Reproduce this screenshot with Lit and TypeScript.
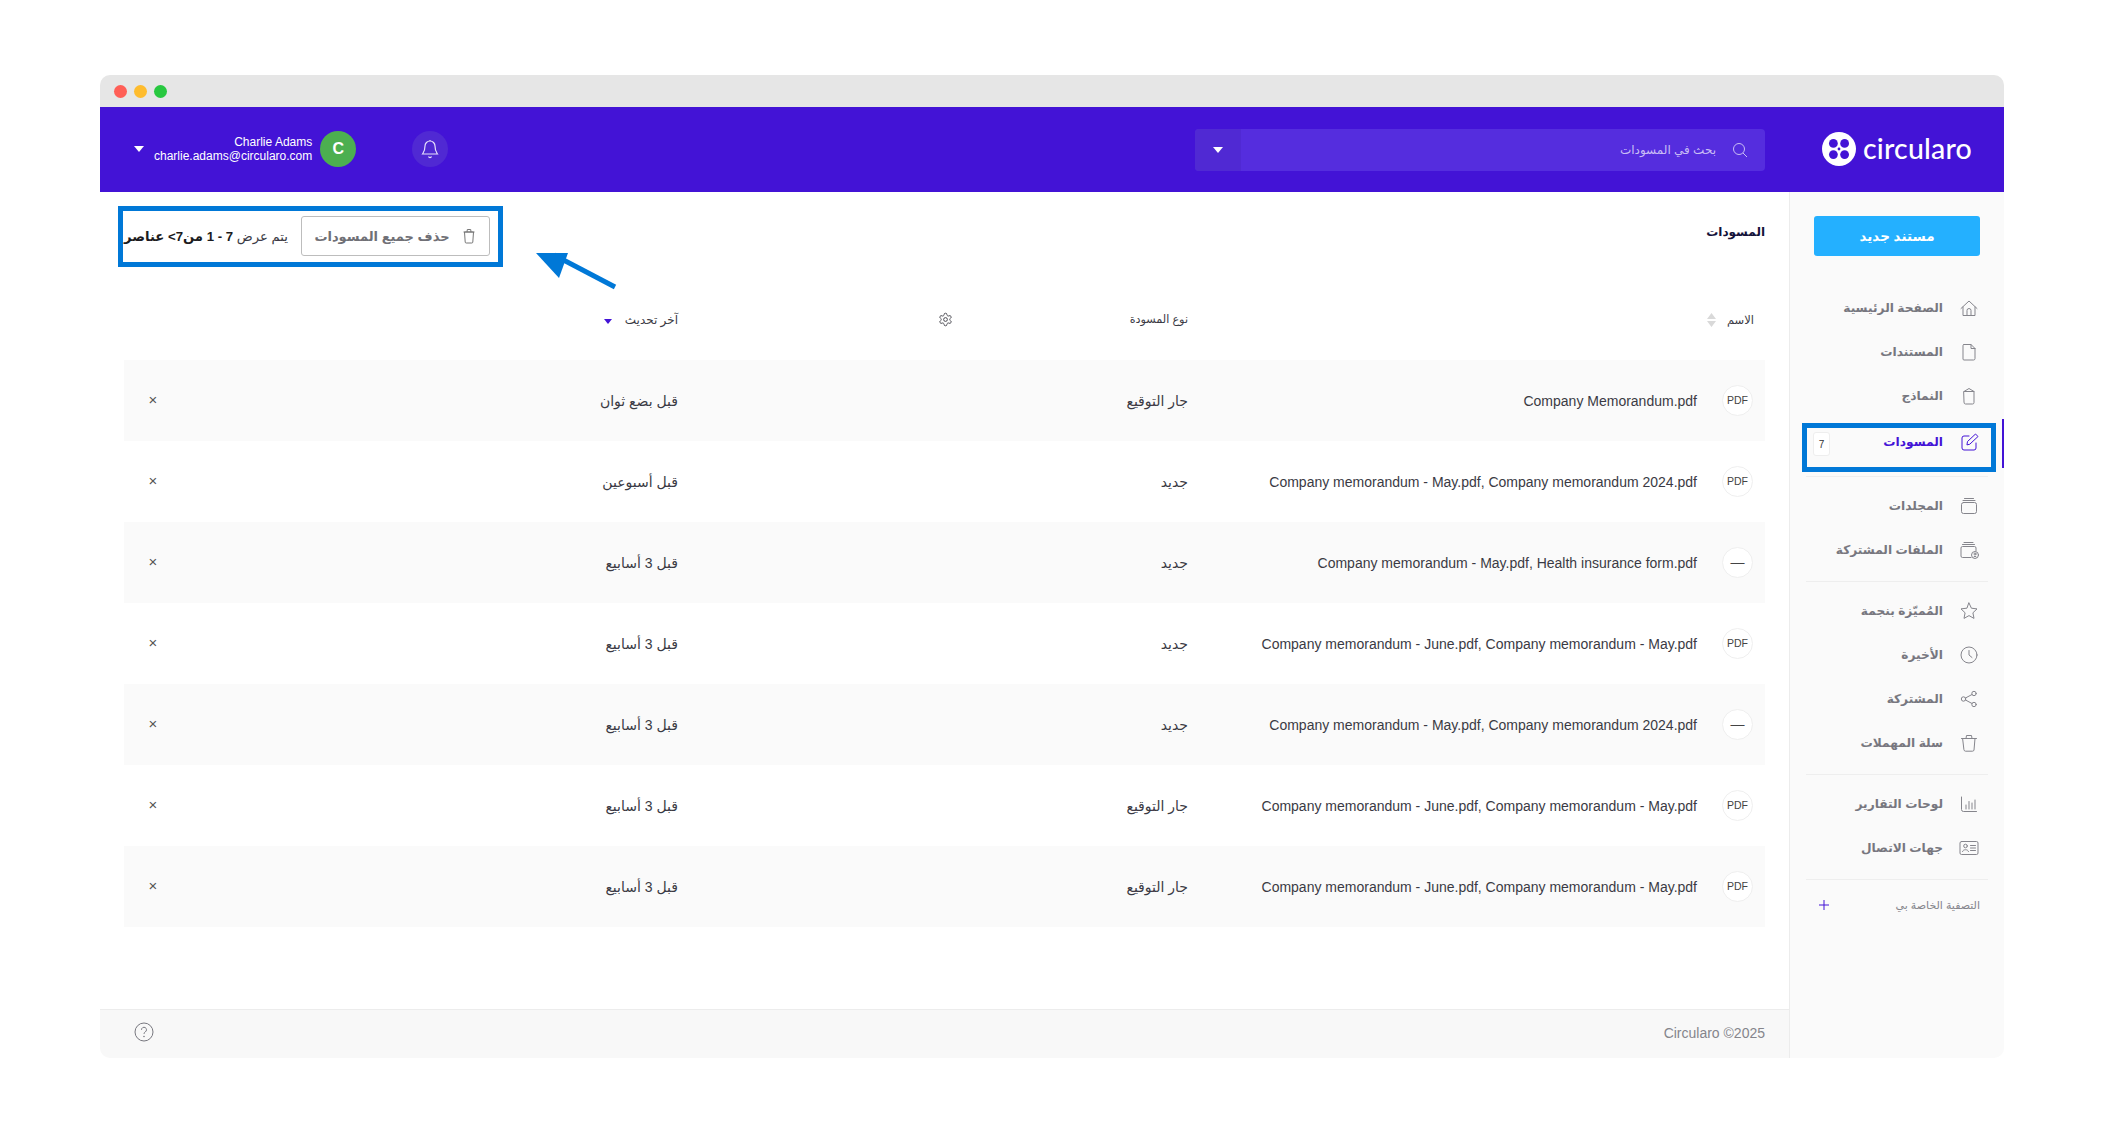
import { LitElement, css, html, svg } from 'lit';
import { customElement } from 'lit/decorators.js';

const ICONS: Record<string, unknown> = {
  home: svg`<path d="M2 10.5 10 3l8 7.5M4 9v8.5h12V9M8 17.5v-5a2 2 0 0 1 4 0v5"/>`,
  doc: svg`<path d="M5 2.5h7l4 4v10a1.5 1.5 0 0 1-1.5 1.5H5A1 1 0 0 1 4 17V3.5a1 1 0 0 1 1-1ZM12 2.5v4h4"/>`,
  template: svg`<path d="M5 5.5 10 2.5l5 3v11a1.5 1.5 0 0 1-1.5 1.5h-7A1.5 1.5 0 0 1 5 16.5ZM5 5.5h10"/>`,
  draft: svg`<path d="M10 4H5a2 2 0 0 0-2 2v10a2 2 0 0 0 2 2h10a2 2 0 0 0 2-2v-5M8 12.5l.5-3 8-7.5 2.5 2.5-8 7.5Z"/>`,
  folder: svg`<rect x="2.5" y="6.5" width="15" height="11" rx="2"/><path d="M4 4.5h12M5.5 2.5h9"/>`,
  sharedFolder: svg`<path d="M12 17.5H3.5A1.5 1.5 0 0 1 2 16V8a1.5 1.5 0 0 1 1.5-1.5h12A1.5 1.5 0 0 1 17 8v3M3.5 4.5h12M5 2.5h9"/><circle cx="16" cy="15" r="3.5"/><circle cx="16" cy="14" r="1"/><path d="M14.5 17c.3-1 2.7-1 3 0"/>`,
  star: svg`<path d="m10 2 2.4 5.2 5.6.7-4.1 3.9 1.1 5.6-5-2.8-5 2.8 1.1-5.6L2 7.9l5.6-.7Z"/>`,
  clock: svg`<circle cx="10" cy="10" r="8"/><path d="M10 5.5V10l3 2.5"/>`,
  share: svg`<circle cx="15" cy="4.5" r="2.2"/><circle cx="4.5" cy="10" r="2.2"/><circle cx="15" cy="15.5" r="2.2"/><path d="m6.5 9 6.5-3.5M6.5 11l6.5 3.5"/>`,
  trash: svg`<path d="M4 5.5h12l-1 11.5a1.5 1.5 0 0 1-1.5 1.2h-7A1.5 1.5 0 0 1 5 17ZM2.5 5.5h15M7 5.5 7.5 2.5h5L13 5.5"/>`,
  chart: svg`<path d="M2.5 3v12.5a2 2 0 0 0 2 2h13M7 15v-4M10 15V7.5M13 15v-6M16 15V6"/>`,
  contact: svg`<rect x="1" y="3.5" width="18" height="13" rx="1.5"/><circle cx="6.5" cy="8" r="1.8"/><path d="M3.5 13.5c.5-2.5 5.5-2.5 6 0M11.5 7.5h5M11.5 10h5M11.5 12.5h5"/>`,
};

const NAV = [
  [
    { label: 'الصفحة الرئيسية', icon: 'home' },
    { label: 'المستندات', icon: 'doc' },
    { label: 'النماذج', icon: 'template' },
    { label: 'المسودات', icon: 'draft', active: true, badge: '7' },
  ],
  [
    { label: 'المجلدات', icon: 'folder' },
    { label: 'الملفات المشتركة', icon: 'sharedFolder' },
  ],
  [
    { label: 'المُميّزة بنجمة', icon: 'star' },
    { label: 'الأخيرة', icon: 'clock' },
    { label: 'المشتركة', icon: 'share' },
    { label: 'سلة المهملات', icon: 'trash' },
  ],
  [
    { label: 'لوحات التقارير', icon: 'chart' },
    { label: 'جهات الاتصال', icon: 'contact' },
  ],
];

const ROWS = [
  { name: 'Company Memorandum.pdf', kind: 'PDF', type: 'جار التوقيع', time: 'قبل بضع ثوان' },
  { name: 'Company memorandum - May.pdf, Company memorandum 2024.pdf', kind: 'PDF', type: 'جديد', time: 'قبل أسبوعين' },
  { name: 'Company memorandum - May.pdf, Health insurance form.pdf', kind: '—', type: 'جديد', time: 'قبل 3 أسابيع' },
  { name: 'Company memorandum - June.pdf, Company memorandum - May.pdf', kind: 'PDF', type: 'جديد', time: 'قبل 3 أسابيع' },
  { name: 'Company memorandum - May.pdf, Company memorandum 2024.pdf', kind: '—', type: 'جديد', time: 'قبل 3 أسابيع' },
  { name: 'Company memorandum - June.pdf, Company memorandum - May.pdf', kind: 'PDF', type: 'جار التوقيع', time: 'قبل 3 أسابيع' },
  { name: 'Company memorandum - June.pdf, Company memorandum - May.pdf', kind: 'PDF', type: 'جار التوقيع', time: 'قبل 3 أسابيع' },
];

@customElement('app-root')
export class AppRoot extends LitElement {
  static styles = css`
    :host {
      display: block;
      min-height: 1133px;
      background: #fff;
      font-family: 'Liberation Sans', 'Noto Sans', 'DejaVu Sans', sans-serif;
      color: #3a3a44;
    }
    .page {
      padding: 75px 100px 0;
    }
    .window {
      position: relative;
      width: 1904px;
      height: 983px;
      display: flex;
      flex-direction: column;
      border-radius: 10px;
      overflow: hidden;
      background: #fff;
    }
    .titlebar {
      height: 32px;
      background: #e6e6e6;
      display: flex;
      align-items: center;
      gap: 7px;
      padding-left: 14px;
      flex: none;
    }
    .dot {
      width: 13px;
      height: 13px;
      border-radius: 50%;
    }
    .dot.red {
      background: #ff5f57;
    }
    .dot.amber {
      background: #febc2e;
    }
    .dot.green {
      background: #28c840;
    }
    .topbar {
      direction: rtl;
      height: 85px;
      flex: none;
      background: #4313d6;
      display: flex;
      align-items: center;
      color: #fff;
    }
    .logo {
      display: flex;
      align-items: center;
      gap: 7px;
      direction: ltr;
      width: 151px;
      margin: -1px 31px 0 0;
      flex: none;
    }
    .logo span {
      font: 500 28.5px Lato, Inter, sans-serif;
      letter-spacing: 0.2px;
      margin-top: -3px;
    }
    .search {
      margin-right: 57px;
      width: 570px;
      height: 42px;
      border-radius: 4px;
      background: #552dde;
      display: flex;
      align-items: center;
      flex: none;
      overflow: hidden;
      font-size: 12px;
      color: #c9bdf5;
    }
    .glass {
      margin-right: 17px;
      margin-left: 16px;
    }
    .search .drop {
      margin-right: auto;
      width: 46px;
      height: 100%;
      background: #5029d3;
      display: flex;
      align-items: center;
      justify-content: center;
    }
    .caret {
      width: 0;
      height: 0;
      border-left: 5px solid transparent;
      border-right: 5px solid transparent;
      border-top: 6px solid #fff;
    }
    .top-end {
      margin: -2px auto 0 0;
      display: flex;
      align-items: center;
      padding-left: 34px;
    }
    .bell {
      width: 36px;
      height: 36px;
      border-radius: 50%;
      background: #5029d3;
      display: flex;
      align-items: center;
      justify-content: center;
      margin-left: 56px;
    }
    .avatar {
      width: 36px;
      height: 36px;
      border-radius: 50%;
      background: #4caf50;
      display: flex;
      align-items: center;
      justify-content: center;
      font-weight: 700;
      font-size: 16px;
      margin-left: 8px;
    }
    .user {
      font-size: 12px;
      line-height: 14px;
      text-align: right;
      direction: ltr;
      margin-left: 10px;
    }
    .body {
      direction: rtl;
      flex: 1;
      min-height: 0;
      display: flex;
    }
    aside {
      width: 215px;
      flex: none;
      box-sizing: border-box;
      background: #fafafa;
      border-left: 1px solid #ececec;
      padding: 24px 0 0;
    }
    .new {
      margin: 0 24px;
      width: 166px;
      height: 40px;
      border-radius: 3px;
      background: #24b0ff;
      color: #fff;
      font-size: 13.5px;
      font-weight: 700;
      display: flex;
      align-items: center;
      justify-content: center;
    }
    .groups {
      margin-top: 30px;
    }
    .group {
      margin: 0 16px 7px;
      padding-bottom: 9px;
      border-bottom: 1px solid #eeeeee;
    }
    .item {
      height: 44px;
      display: flex;
      align-items: center;
      margin: 0 -16px;
      padding-right: 25px;
      color: #77777f;
      font-size: 12.2px;
      font-weight: 700;
      position: relative;
    }
    .item svg {
      width: 20px;
      height: 20px;
      fill: none;
      stroke: #85858c;
      stroke-width: 1;
      stroke-linecap: round;
      stroke-linejoin: round;
      flex: none;
      margin-left: 16px;
    }
    .item.active {
      color: #4313d6;
      margin-top: 2px;
      margin-bottom: 3px;
    }
    .item.active svg {
      stroke: #4313d6;
    }
    .item.active::before {
      content: '';
      position: absolute;
      right: 0;
      top: -1px;
      bottom: -4px;
      width: 2px;
      background: #4313d6;
    }
    .badge {
      position: absolute;
      left: 23px;
      top: 12px;
      width: 17px;
      height: 24px;
      box-sizing: border-box;
      background: #fff;
      border: 1px solid #eeeeee;
      border-radius: 3px;
      font-size: 10px;
      font-weight: 400;
      color: #333;
      display: flex;
      align-items: center;
      justify-content: center;
    }
    .filters {
      margin: 9px 16px 0;
      padding: 0 8px 0 13px;
      display: flex;
      align-items: center;
      justify-content: space-between;
      height: 32px;
      font-size: 11px;
      color: #85858c;
    }
    .content {
      flex: 1;
      min-width: 0;
      display: flex;
      flex-direction: column;
    }
    .main {
      flex: 1;
      padding: 0 24px;
    }
    .head {
      height: 84px;
      display: flex;
      align-items: flex-start;
      justify-content: space-between;
    }
    h1 {
      margin: 33px 0 0;
      font-size: 12px;
      font-weight: 700;
      color: #14123a;
    }
    .tools {
      margin-top: 24px;
      display: flex;
      align-items: center;
      gap: 13px;
      font-size: 13.2px;
      height: 40px;
    }
    .clear {
      box-sizing: border-box;
      width: 189px;
      height: 40px;
      border: 1px solid #bdbdbd;
      border-radius: 3px;
      display: flex;
      align-items: center;
      justify-content: center;
      gap: 11px;
      color: #707076;
      font-size: 13px;
      font-weight: 700;
    }
    .clear svg {
      width: 16px;
      height: 16px;
      fill: none;
      stroke: #777;
      stroke-width: 1;
    }
    .summary b {
      color: #1b1b20;
    }
    .row,
    .columns {
      display: grid;
      grid-template-columns: 577px 510px 1fr 58px;
      align-items: center;
    }
    .columns {
      height: 84px;
      box-sizing: border-box;
      padding-top: 3px;
      font-size: 11.5px;
    }
    .row {
      height: 81px;
      font-size: 14px;
    }
    .row:nth-child(odd) {
      background: #fafafa;
    }
    .name {
      display: flex;
      align-items: center;
      gap: 25px;
      padding-right: 12px;
    }
    .kind {
      width: 31px;
      height: 31px;
      box-sizing: border-box;
      border: 1px solid #efefef;
      border-radius: 50%;
      background: #fff;
      flex: none;
      display: flex;
      align-items: center;
      justify-content: center;
      font-size: 10.5px;
      color: #444;
      margin-top: -1px;
    }
    .kind.dash {
      font-size: 14px;
    }
    .ltr {
      direction: ltr;
    }
    .close {
      font-size: 15px;
      color: #555;
      text-align: center;
      margin-top: -3px;
    }
    .col-name {
      display: flex;
      align-items: center;
      gap: 11px;
      padding-right: 11px;
    }
    .sort {
      fill: #d9d9d9;
    }
    .col-type {
      display: flex;
      align-items: center;
      font-size: 11.2px;
    }
    .gear {
      margin-right: auto;
      margin-left: 260px;
      fill: none;
      stroke: #4a4a52;
      stroke-width: 1.6;
    }
    .col-time {
      display: flex;
      align-items: center;
      gap: 13px;
      font-size: 12px;
    }
    .col-time .caret {
      border-top-color: #4313d6;
      border-left-width: 4px;
      border-right-width: 4px;
      border-top-width: 5px;
      margin-top: 4px;
    }
    footer {
      height: 49px;
      flex: none;
      box-sizing: border-box;
      background: #f8f8f8;
      border-top: 1px solid #ececec;
      display: flex;
      align-items: center;
      justify-content: space-between;
      padding: 0 24px 2px 34px;
      font-size: 14px;
      color: #85858c;
    }
    .help {
      margin-top: -2px;
    }
    .mark {
      position: absolute;
      box-sizing: border-box;
      border: 5px solid #0078d7;
      pointer-events: none;
    }
    .mark.toolbar {
      left: 18px;
      top: 131px;
      width: 385px;
      height: 61px;
    }
    .mark.nav {
      left: 1702px;
      top: 348px;
      width: 194px;
      height: 49px;
    }
    .arrow {
      position: absolute;
      left: 430px;
      top: 170px;
      pointer-events: none;
    }
  `;

  private logo() {
    return html`<svg width="34" height="34" viewBox="0 0 34 34">
      <circle cx="17" cy="17" r="17" fill="#fff" />
      <g fill="#4313d6">
        <circle cx="11.4" cy="11.4" r="4.4" />
        <circle cx="22.6" cy="11.4" r="4.4" />
        <circle cx="11.4" cy="22.6" r="4.4" />
        <circle cx="22.6" cy="22.6" r="4.4" />
      </g>
      <circle cx="17" cy="17" r="3" fill="#fff" />
      <circle cx="17" cy="17" r="1.4" fill="#4313d6" />
    </svg>`;
  }

  private renderRow(r: (typeof ROWS)[number]) {
    return html`<div class="row">
      <div class="name">
        <span class="kind ${r.kind === 'PDF' ? '' : 'dash'}">${r.kind}</span>
        <span class="ltr">${r.name}</span>
      </div>
      <div>${r.type}</div>
      <div>${r.time}</div>
      <div class="close">×</div>
    </div>`;
  }

  render() {
    return html`<div class="page">
      <div class="window">
        <div class="titlebar">
          <span class="dot red"></span>
          <span class="dot amber"></span>
          <span class="dot green"></span>
        </div>
        <div class="topbar">
          <div class="logo">${this.logo()}<span>circularo</span></div>
          <div class="search">
            <svg class="glass" width="16" height="16" viewBox="0 0 16 16" fill="none" stroke="#c9bdf5">
              <circle cx="7" cy="7" r="5.5" />
              <path d="m11 11 4 4" />
            </svg>
            بحث في المسودات
            <div class="drop"><span class="caret"></span></div>
          </div>
          <div class="top-end">
            <div class="bell">
              <svg width="18" height="20" viewBox="0 0 18 20" fill="none" stroke="#e6e0fb" stroke-width="1.2">
                <path d="M9 2a5 5 0 0 0-5 5c0 5-1.5 6.5-2.5 8h15C15.5 13.5 14 12 14 7a5 5 0 0 0-5-5ZM7.5 17.5a1.6 1.6 0 0 0 3 0M9 1v1" />
              </svg>
            </div>
            <div class="avatar">C</div>
            <div class="user">Charlie Adams<br />charlie.adams@circularo.com</div>
            <span class="caret"></span>
          </div>
        </div>
        <div class="body">
          <aside>
            <div class="new">مستند جديد</div>
            <div class="groups">
              ${NAV.map(
                (group) => html`<div class="group">
                  ${group.map(
                    (it: any) => html`<div class="item ${it.active ? 'active' : ''}">
                      <svg viewBox="0 0 20 20">${ICONS[it.icon]}</svg>
                      ${it.label} ${it.badge ? html`<span class="badge">${it.badge}</span>` : ''}
                    </div>`,
                  )}
                </div>`,
              )}
            </div>
            <div class="filters">
              <span>التصفية الخاصة بي</span>
              <svg width="10" height="10" viewBox="0 0 10 10" stroke="#4313d6"><path d="M5 0v10M0 5h10" /></svg>
            </div>
          </aside>
          <div class="content">
            <div class="main">
              <div class="head">
                <h1>المسودات</h1>
                <div class="tools">
                  <div class="clear">
                    <svg viewBox="0 0 16 16"><path d="M3.5 4h9l-.7 10a1 1 0 0 1-1 1H5.2a1 1 0 0 1-1-1ZM2.5 4h11M6 4l.3-2.5h3.4L10 4" /></svg>
                    حذف جميع المسودات
                  </div>
                  <span class="summary">يتم عرض <b>7 - 1 من7&gt; عناصر</b></span>
                </div>
              </div>
              <div class="columns">
                <div class="col-name">
                  الاسم
                  <svg class="sort" width="9" height="14" viewBox="0 0 9 14"><path d="M4.5 0 9 6H0ZM4.5 14 0 8h9Z" /></svg>
                </div>
                <div class="col-type">
                  نوع المسودة
                  <svg class="gear" width="15" height="15" viewBox="0 0 24 24">
                    <path d="M12.22 2h-.44a2 2 0 0 0-2 2v.18a2 2 0 0 1-1 1.73l-.43.25a2 2 0 0 1-2 0l-.15-.08a2 2 0 0 0-2.73.73l-.22.38a2 2 0 0 0 .73 2.73l.15.1a2 2 0 0 1 1 1.72v.51a2 2 0 0 1-1 1.74l-.15.09a2 2 0 0 0-.73 2.73l.22.38a2 2 0 0 0 2.73.73l.15-.08a2 2 0 0 1 2 0l.43.25a2 2 0 0 1 1 1.73V20a2 2 0 0 0 2 2h.44a2 2 0 0 0 2-2v-.18a2 2 0 0 1 1-1.73l.43-.25a2 2 0 0 1 2 0l.15.08a2 2 0 0 0 2.73-.73l.22-.39a2 2 0 0 0-.73-2.73l-.15-.08a2 2 0 0 1-1-1.74v-.5a2 2 0 0 1 1-1.74l.15-.09a2 2 0 0 0 .73-2.73l-.22-.38a2 2 0 0 0-2.73-.73l-.15.08a2 2 0 0 1-2 0l-.43-.25a2 2 0 0 1-1-1.73V4a2 2 0 0 0-2-2z" />
                    <circle cx="12" cy="12" r="3" />
                  </svg>
                </div>
                <div class="col-time">آخر تحديث <span class="caret"></span></div>
                <div></div>
              </div>
              <div>${ROWS.map((r) => this.renderRow(r))}</div>
            </div>
            <footer>
              <span>Circularo ©2025</span>
              <svg class="help" width="20" height="20" viewBox="0 0 20 20" fill="none" stroke="#77777f">
                <circle cx="10" cy="10" r="9" />
                <path d="M7.5 7.8a2.5 2.5 0 1 1 3.8 2.1c-.9.6-1.3 1-1.3 2" />
                <circle cx="10" cy="14.5" r=".4" />
              </svg>
            </footer>
          </div>
        </div>
        <div class="mark toolbar"></div>
        <div class="mark nav"></div>
        <svg class="arrow" width="100" height="50" viewBox="0 0 100 50">
          <path d="M85 42 24 10" stroke="#0078d7" stroke-width="5" />
          <path d="M6 8 38 8 29 33Z" fill="#0078d7" />
        </svg>
      </div>
    </div>`;
  }
}

declare global {
  interface HTMLElementTagNameMap {
    'app-root': AppRoot;
  }
}
